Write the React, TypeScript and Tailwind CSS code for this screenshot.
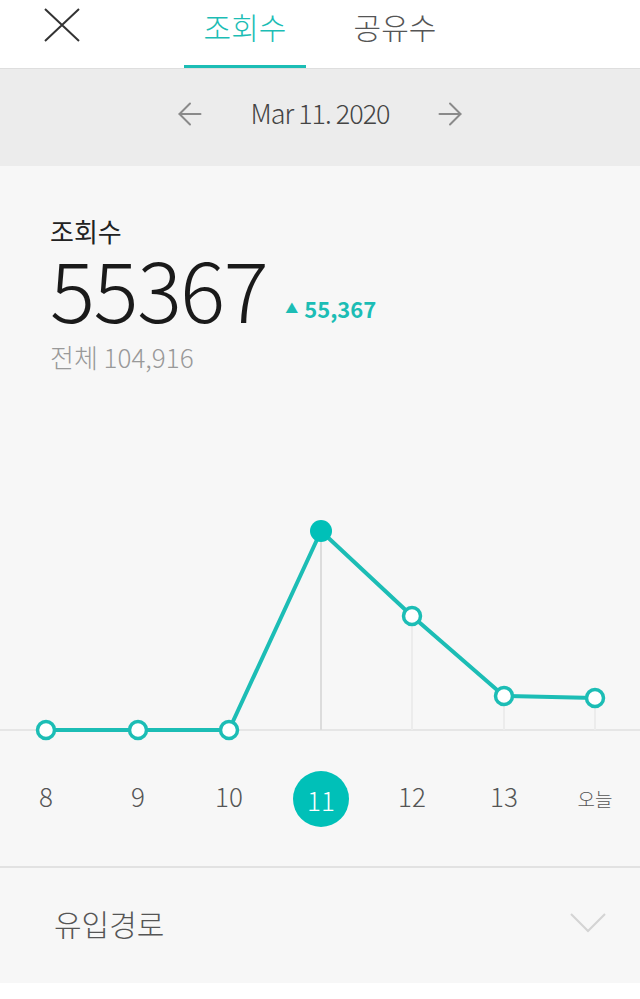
import { ArrowLeft, ArrowRight } from 'lucide-react'

const TEAL = '#1cbdb5'

const days = [
  { label: '8', x: 46, y: 230 },
  { label: '9', x: 138, y: 230 },
  { label: '10', x: 229, y: 230 },
  { label: '11', x: 321, y: 31 },
  { label: '12', x: 412, y: 116 },
  { label: '13', x: 504, y: 196 },
  { label: '오늘', x: 595, y: 198 },
]

const SELECTED = 3

function Chart() {
  const line = days.map(d => `${d.x},${d.y}`).join(' ')
  return (
    <svg width="640" height="260" viewBox="0 0 640 260" className="block">
      <line x1="0" y1="230" x2="640" y2="230" stroke="#e6e6e6" strokeWidth="2" />
      {days.map((d, i) =>
        i >= SELECTED ? (
          <line
            key={`g-${i}`}
            x1={d.x}
            y1={d.y}
            x2={d.x}
            y2={230}
            stroke={i === SELECTED ? '#dcdcdc' : '#ececec'}
            strokeWidth="2"
          />
        ) : null
      )}
      <polyline points={line} fill="none" stroke={TEAL} strokeWidth="4" strokeLinejoin="round" />
      {days.map((d, i) =>
        i === SELECTED ? (
          <circle key={i} cx={d.x} cy={d.y} r="11" fill="#00c0b8" />
        ) : (
          <circle key={i} cx={d.x} cy={d.y} r="8.5" fill="#fff" stroke={TEAL} strokeWidth="3.5" />
        )
      )}
    </svg>
  )
}

export default function App() {
  return (
    <div
      className="w-[640px] min-h-[999px] bg-white"
      style={{ fontFamily: '"Noto Sans CJK KR", "Noto Sans", sans-serif' }}
    >
      {/* header tabs */}
      <div className="h-[69px] flex items-start border-b border-[#dedede] bg-white">
        <button className="ml-[44px] mt-[8px]">
          <svg width="36" height="34" viewBox="0 0 36 34">
            <path d="M1 1 L35 33 M35 1 L1 33" stroke="#333" strokeWidth="2" fill="none" />
          </svg>
        </button>
        <div className="ml-[104px] w-[122px] h-[68px] flex justify-center border-b-[3px] border-[#1cbdb5]">
          <span className="text-[30px] leading-[52px] font-light text-[#1cbdb5]">조회수</span>
        </div>
        <div className="ml-[28px] w-[122px] h-[68px] flex justify-center">
          <span className="text-[30px] leading-[52px] font-light text-[#555]">공유수</span>
        </div>
      </div>

      {/* date bar */}
      <div className="h-[97px] pb-[8px] bg-[#ececec] flex items-center justify-center gap-[42px]">
        <ArrowLeft size={36} strokeWidth={1.3} className="text-[#8a8a8a]" />
        <span className="text-[27px] font-light text-[#444] tracking-[-1px]">Mar 11. 2020</span>
        <ArrowRight size={36} strokeWidth={1.3} className="text-[#8a8a8a]" />
      </div>

      <div className="bg-[#f7f7f7]">
        {/* stats */}
        <div className="h-[334px] pl-[50px] pt-[48px]">
          <div className="text-[26px] leading-[34px] text-[#222]">조회수</div>
          <div className="flex items-end gap-[18px] -mt-[2px]">
            <span className="text-[84px] leading-[82px] font-light text-[#1a1a1a] tracking-[-1.5px]">55367</span>
            <span className="flex items-center gap-[6px] mb-[6px] text-[#1cbdb5] text-[22px] leading-[28px] font-bold">
              <span className="text-[13px]">▲</span>55,367
            </span>
          </div>
          <div className="mt-[14px] text-[26px] leading-[30px] font-light text-[#999]">전체 104,916</div>
        </div>

        <Chart />

        {/* day labels */}
        <div className="relative h-[106px]">
          {days.map((d, i) => (
            <div
              key={d.label}
              className="absolute top-[11px] w-[56px] h-[56px] -ml-[28px] flex items-center justify-center"
              style={{ left: d.x }}
            >
              {i === SELECTED ? (
                <span className="w-[56px] h-[56px] rounded-full bg-[#00c0b8] text-white text-[26px] font-light flex items-center justify-center">
                  {d.label}
                </span>
              ) : (
                <span
                  className={
                    d.label === '오늘'
                      ? 'text-[19px] font-light text-[#555] mt-[0px]'
                      : 'text-[26px] font-light text-[#555] -mt-[8px]'
                  }
                >
                  {d.label}
                </span>
              )}
            </div>
          ))}
        </div>

        {/* inflow */}
        <div className="h-[117px] border-t-2 border-[#e2e2e2] flex items-center justify-between pl-[54px] pr-[34px]">
          <span className="text-[30px] font-light text-[#555] -mt-[4px]">유입경로</span>
          <svg width="36" height="20" viewBox="0 0 36 20" className="-mt-[6px]">
            <path d="M1 1 L18 18 L35 1" stroke="#d4d4d4" strokeWidth="2" fill="none" />
          </svg>
        </div>
      </div>
    </div>
  )
}
